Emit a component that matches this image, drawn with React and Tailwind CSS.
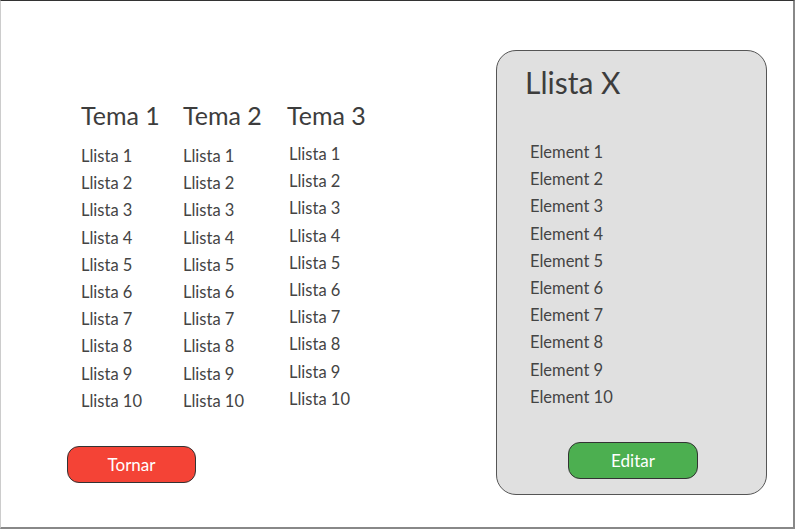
import React from 'react';

const temes = ['Tema 1', 'Tema 2', 'Tema 3'];
const nums = [1, 2, 3, 4, 5, 6, 7, 8, 9, 10];

export default function App() {
  return (
    <div
      className="w-[795px] h-[529px] bg-white flex border-t border-t-[#333] border-l border-l-[#ccc] border-r-2 border-r-[#888] border-b-2 border-b-[#888] text-[#444]"
      style={{ fontFamily: 'Lato, "Open Sans", sans-serif' }}
    >
      <div className="pl-[66px] pt-[99px] flex flex-col">
        <div className="pl-[14px] flex">
          {temes.map((t, i) => (
            <div key={t} className={i === 0 ? 'w-[102px]' : i === 1 ? 'w-[104px]' : 'w-[100px]'}>
              <h2 className="text-[25px] leading-[30px] text-[#3d3d3d] whitespace-nowrap">{t}</h2>
              <ul className={i === 2 ? 'mt-[12px] pl-[2px] -translate-y-[1px]' : 'mt-[13px]'}>
                {nums.map((n) => (
                  <li key={n} className="text-[16.5px] leading-[27.2px] whitespace-nowrap">
                    Llista {n}
                  </li>
                ))}
              </ul>
            </div>
          ))}
        </div>
        <button className="mt-[31px] w-[129px] h-[37px] rounded-[12px] bg-[#f44336] border border-[#333] text-white text-[17px]">
          Tornar
        </button>
      </div>

      <div className="ml-auto mt-[49px] mr-[26px] w-[271px] h-[445px] rounded-[20px] bg-[#e0e0e0] border border-[#555] flex flex-col">
        <h1 className="pl-[28px] pt-[12px] text-[30px] leading-[38px] text-[#3d3d3d]">Llista X</h1>
        <ul className="pl-[33px] mt-[38px]">
          {nums.map((n) => (
            <li key={n} className="text-[16.5px] leading-[27.2px]">
              Element {n}
            </li>
          ))}
        </ul>
        <button className="ml-[71px] mt-[31px] w-[130px] h-[37px] rounded-[12px] bg-[#4caf50] border border-[#333] text-white text-[17px]">
          Editar
        </button>
      </div>
    </div>
  );
}
